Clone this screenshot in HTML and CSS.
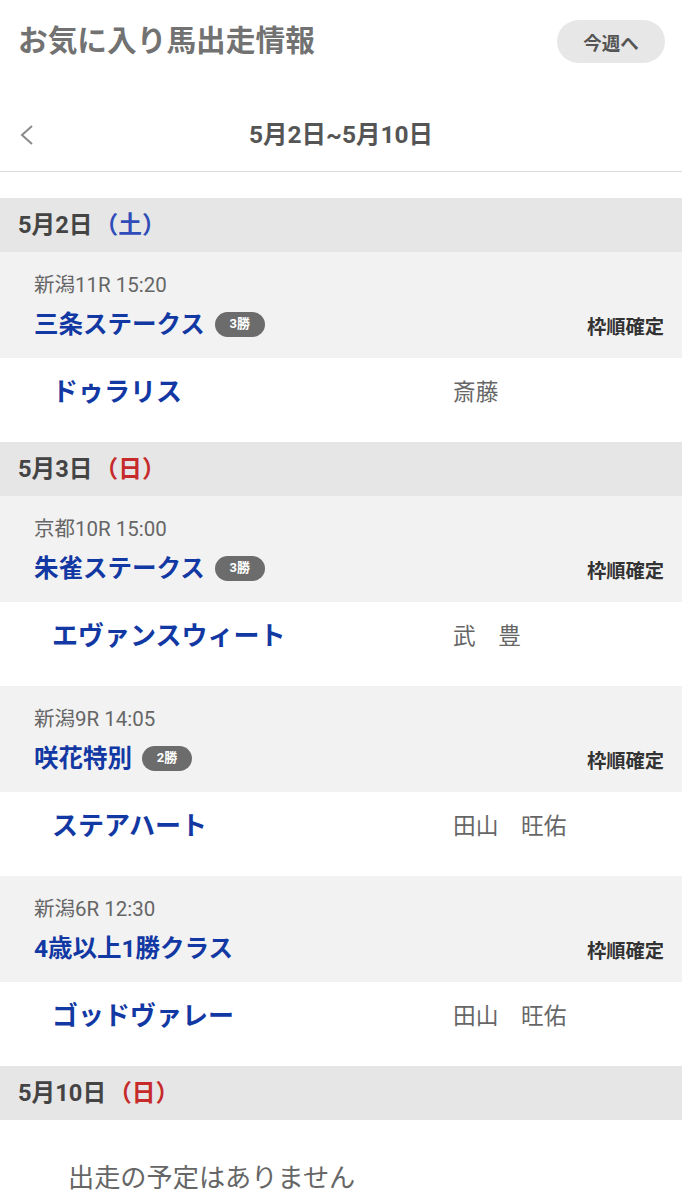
FILE: index.html
```html
<!DOCTYPE html>
<html lang="ja">
<head>
<meta charset="utf-8">
<link rel="stylesheet" href="styles.css">
</head>
<body>
<div class="page">
  <header class="topbar">
    <h1 class="title">お気に入り馬出走情報</h1>
    <button class="week-btn">今週へ</button>
  </header>
  <nav class="range">
    <span class="back"><svg width="16" height="24" viewBox="0 0 16 24"><polyline points="13,3 3,12 13,21" fill="none" stroke="#8a8a8a" stroke-width="2"/></svg></span>
    <span class="range-text">5月2日~5月10日</span>
    <span></span>
  </nav>

  <div class="list">
    <div class="day">5月2日<span class="sat">（土）</span></div>
    <div class="race">
      <div class="race-info">新潟11R 15:20</div>
      <div class="race-row">
        <div class="race-name">三条ステークス<span class="badge">3勝</span></div>
        <div class="status">枠順確定</div>
      </div>
    </div>
    <div class="horse">
      <div class="horse-name">ドゥラリス</div>
      <div class="jockey">斎藤</div>
    </div>

    <div class="day">5月3日<span class="sun">（日）</span></div>
    <div class="race">
      <div class="race-info">京都10R 15:00</div>
      <div class="race-row">
        <div class="race-name">朱雀ステークス<span class="badge">3勝</span></div>
        <div class="status">枠順確定</div>
      </div>
    </div>
    <div class="horse">
      <div class="horse-name">エヴァンスウィート</div>
      <div class="jockey">武　豊</div>
    </div>
    <div class="race">
      <div class="race-info">新潟9R 14:05</div>
      <div class="race-row">
        <div class="race-name">咲花特別<span class="badge">2勝</span></div>
        <div class="status">枠順確定</div>
      </div>
    </div>
    <div class="horse">
      <div class="horse-name">ステアハート</div>
      <div class="jockey">田山　旺佑</div>
    </div>
    <div class="race">
      <div class="race-info">新潟6R 12:30</div>
      <div class="race-row">
        <div class="race-name">4歳以上1勝クラス</div>
        <div class="status">枠順確定</div>
      </div>
    </div>
    <div class="horse">
      <div class="horse-name">ゴッドヴァレー</div>
      <div class="jockey">田山　旺佑</div>
    </div>

    <div class="day">5月10日<span class="sun">（日）</span></div>
    <div class="empty">出走の予定はありません</div>
  </div>
</div>
</body>
</html>
```

FILE: styles.css
```css
* { box-sizing: border-box; }
html, body { margin: 0; padding: 0; background: #fff; }
body {
  font-family: Roboto, "Noto Sans CJK JP", sans-serif;
  width: 682px;
  overflow: hidden;
}
.topbar {
  height: 84px;
  display: flex;
  align-items: center;
  justify-content: space-between;
  padding: 0 17px 0 18px;
}
.title {
  margin: 0;
  font-size: 29.7px;
  font-weight: 700;
  color: #727272;
  line-height: 40px;
  position: relative;
  top: -1px;
}
.week-btn {
  width: 108px;
  height: 43px;
  margin-top: -1px;
  border: none;
  border-radius: 22px;
  background: #e7e7e7;
  color: #555;
  font-family: Roboto, "Noto Sans CJK JP", sans-serif;
  font-size: 18.5px;
  font-weight: 700;
  padding: 0;
}
.range {
  height: 88px;
  display: grid;
  grid-template-columns: 1fr auto 1fr;
  align-items: start;
  padding: 36px 0 0 0;
  border-bottom: 1px solid #dcdcdc;
}
.back { padding-left: 19px; padding-top: 3px; display: flex; }
.range-text {
  font-size: 24.5px;
  font-weight: 700;
  color: #555;
  line-height: 30px;
}
.list { margin-top: 26px; }
.day {
  height: 54px;
  background: #e6e6e6;
  padding-left: 18px;
  font-size: 23.7px;
  font-weight: 700;
  color: #444;
  line-height: 54px;
}
.sat, .sun { margin-left: 2px; }
.sat { color: #2f4cb8; }
.sun { color: #c62a2a; }
.race {
  height: 106px;
  background: #f2f2f2;
  padding: 20px 18px 0 34px;
}
.race-info {
  font-size: 20.5px;
  color: #666;
  line-height: 26px;
}
.race-row {
  margin-top: 10px;
  height: 34px;
  display: flex;
  align-items: center;
  justify-content: space-between;
}
.race-name {
  font-size: 24.5px;
  font-weight: 700;
  color: #1238a3;
  display: flex;
  align-items: center;
  line-height: 34px;
}
.badge {
  display: inline-flex;
  align-items: center;
  justify-content: center;
  width: 50px;
  height: 25px;
  margin-left: 10px;
  border-radius: 13px;
  background: #6c6c6c;
  color: #fff;
  font-size: 13px;
  font-weight: 700;
  position: relative;
  top: -1px;
}
.status {
  font-size: 19.3px;
  font-weight: 700;
  color: #333;
  position: relative;
  top: 1px;
}
.horse {
  height: 84px;
  background: #fff;
  display: flex;
  padding: 18px 0 0 52px;
}
.horse-name {
  width: 401px;
  font-size: 26px;
  font-weight: 700;
  color: #1238a3;
  line-height: 32px;
}
.jockey {
  font-size: 22.7px;
  color: #666;
  line-height: 32px;
  padding-top: 1px;
}
.empty {
  padding: 40px 0 0 68px;
  font-size: 26.2px;
  color: #666;
  line-height: 36px;
}
```
